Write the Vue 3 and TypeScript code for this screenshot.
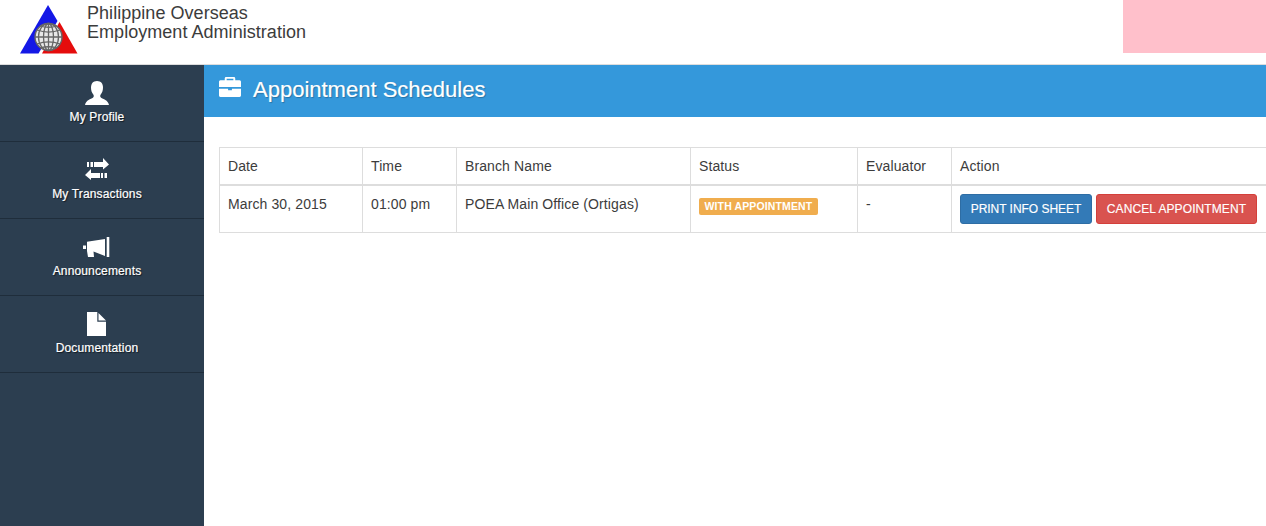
<script setup lang="ts">
interface NavItem { label: string; icon: string }
const nav: NavItem[] = [
  { label: 'My Profile', icon: 'user' },
  { label: 'My Transactions', icon: 'transfer' },
  { label: 'Announcements', icon: 'bullhorn' },
  { label: 'Documentation', icon: 'file' },
]
</script>

<template>
  <div class="page">
    <header class="top">
      <div class="brand">
        <svg class="logo" width="58" height="50" viewBox="0 0 58 50">
          <polygon points="28,0 37.500,16 18.500,48.500 0,48.500" fill="#1418e6" />
          <polygon points="39.500,17 57.500,48.500 22,48.500" fill="#e50c0c" />
          <circle cx="28.500" cy="32" r="13.500" fill="#e8e8e8" stroke="#666" stroke-width="1.400" />
          <g fill="none" stroke="#666" stroke-width="1.300">
            <ellipse cx="28.500" cy="32" rx="5" ry="13.500" />
            <ellipse cx="28.500" cy="32" rx="10" ry="13.500" />
            <path d="M28.500 18.500v27M15 32h27" />
            <path d="M17 25c7 2.500 16 2.500 23 0M17 39c7-2.500 16-2.500 23 0" />
            <path d="M20 21c5 1.500 12 1.500 17 0M20 43c5-1.500 12-1.500 17 0" />
          </g>
        </svg>
        <div class="agency">
          <div>Philippine Overseas</div>
          <div>Employment Administration</div>
        </div>
      </div>
      <div class="pink"></div>
    </header>
    <div class="body">
      <aside class="side">
        <a v-for="item in nav" :key="item.label" class="nav">
          <svg class="ico" width="28" height="28" viewBox="0 0 28 28" fill="#fff">
            <path v-if="item.icon === 'user'" d="M14 2c-4 0-6 2.800-6 6.500 0 3 .8 5.200 2.300 7 .7.900.7 2.500-.4 3.300C8 20.200 3 21 2 26h24c-1-5-6-5.800-7.900-7.200-1.100-.8-1.100-2.400-.4-3.300 1.500-1.800 2.300-4 2.300-7C20 4.800 18 2 14 2z" />
            <g v-else-if="item.icon === 'transfer'">
              <path d="M4 6h2v5H4zM7.500 6H10v5H7.500zM11 6h9V2l6 6.500-6 5v-2.500h-9z" />
              <path d="M2 19l6-6v4h9v5H8v2zM18 17h2v5h-2zM21.500 17H24v5h-2.500z" />
            </g>
            <path v-else-if="item.icon === 'bullhorn'" d="M23.700 4h2.600v20h-2.600zM22 6v17l-11.500-4.500L11 24H5l-1-6V8.700zM0 12.500h3V16H0z" />
            <path v-else fill-rule="evenodd" d="M4 2h10.300v9.700H23V26H4zM15.500 3 23 10.500h-7.500z" />
          </svg>
          <span>{{ item.label }}</span>
        </a>
      </aside>
      <main class="main">
        <div class="bar">
          <svg class="case" width="22" height="20" viewBox="0.500 0.500 23 18" preserveAspectRatio="none" fill="#fff">
            <path d="M8 0.500h8c1 0 1.500.5 1.500 1.500v1.500H22c1 0 1.500.7 1.500 1.500v4.500H.5V5C.5 4.200 1 3.500 2 3.500h4.500V2C6.500 1 7 .5 8 .5zm.5 1.500v1.500h7V2z" fill-rule="evenodd" />
            <path d="M.5 11H10v1.500h4V11h9.500v6c0 1-.6 1.500-1.500 1.500H2C1 18.500.5 18 .5 17z" />
          </svg>
          <h1>Appointment Schedules</h1>
        </div>
        <div class="content">
          <table>
            <colgroup>
              <col style="width: 143px" /><col style="width: 94px" /><col style="width: 234px" />
              <col style="width: 167px" /><col style="width: 94px" /><col style="width: 315px" />
            </colgroup>
            <thead>
              <tr><th>Date</th><th>Time</th><th>Branch Name</th><th>Status</th><th>Evaluator</th><th>Action</th></tr>
            </thead>
            <tbody>
              <tr>
                <td>March 30, 2015</td>
                <td>01:00 pm</td>
                <td>POEA Main Office (Ortigas)</td>
                <td><span class="label">WITH APPOINTMENT</span></td>
                <td>-</td>
                <td class="actions">
                  <button class="btn blue">PRINT INFO SHEET</button>
                  <button class="btn red">CANCEL APPOINTMENT</button>
                </td>
              </tr>
            </tbody>
          </table>
        </div>
      </main>
    </div>
  </div>
</template>

<style>
html, body { margin: 0; overflow: hidden; }
</style>

<style scoped>
.page {
  width: 1266px;
  height: 526px;
  overflow: hidden;
  display: flex;
  flex-direction: column;
  font-family: "Liberation Sans", Arial, sans-serif;
  font-size: 14px;
  color: #3c3c3c;
  background: #fff;
}
.top {
  height: 64px;
  flex: none;
  display: flex;
  justify-content: space-between;
  align-items: flex-start;
  border-bottom: 1px solid #ddd;
}
.brand { display: flex; align-items: flex-start; padding-left: 20px; }
.logo { margin-top: 5px; }
.agency { margin: 4px 0 0 9px; font-size: 18px; line-height: 19px; letter-spacing: .04px; color: #3c3c3c; }
.pink { width: 143px; height: 53px; background: #ffc0cb; }
.body { flex: 1; display: flex; min-height: 0; }
.side { width: 204px; flex: none; background: #2c3e50; }
.nav {
  height: 76px;
  padding-right: 14px;
  padding-left: 4px;
  border-bottom: 1px solid #1f2d3b;
  display: flex;
  flex-direction: column;
  align-items: center;
  color: #fff;
  font-size: 12px;
  letter-spacing: .15px;
  -webkit-text-stroke: .2px #fff;
  text-shadow: 1px 1px 1px rgba(0, 0, 0, .6);
}
.ico { margin: 14px 0 2px; }
.nav span { line-height: 16px; }
.main { flex: 1; min-width: 0; }
.bar {
  height: 52px;
  background: #3498db;
  display: flex;
  align-items: center;
  padding-left: 15px;
  color: #fff;
}
.case { margin: -8px 12px 0 0; }
.bar h1 {
  margin: -2px 0 0;
  font-size: 22px;
  font-weight: 400;
  line-height: 48px;
  -webkit-text-stroke: .2px #fff;
  text-shadow: 1px 1px 1px rgba(0, 0, 0, .25);
}
.content { padding: 30px 0 0 15px; }
table {
  border-collapse: collapse;
  table-layout: fixed;
  width: 1047px;
}
th, td {
  border: 1px solid #ddd;
  padding: 8px;
  text-align: left;
  font-weight: 400;
  line-height: 20px;
  vertical-align: top;
  letter-spacing: .11px;
}
th { height: 20px; border-bottom-width: 2px; }
td { height: 30px; }
.label {
  display: inline-block;
  background: #f0ad4e;
  color: #fff;
  font-size: 10.500px;
  font-weight: 700;
  letter-spacing: .13px;
  line-height: 11px;
  padding: 3px 5.500px;
  border-radius: 2px;
  vertical-align: top;
  margin-top: 4px;
}
.actions { white-space: nowrap; }
.btn {
  font: 400 12px/18px "Liberation Sans", Arial, sans-serif;
  color: #fff;
  border: 1px solid;
  border-radius: 3px;
  padding: 0;
  height: 30px;
  margin: 0;
  vertical-align: top;
  -webkit-text-stroke: .15px #fff;
}
.btn + .btn { margin-left: 4px; }
.blue { background: #337ab7; border-color: #2e6da4; width: 132px; letter-spacing: -.03px; }
.red { background: #d9534f; border-color: #d43f3a; width: 161px; letter-spacing: .1px; }
</style>
